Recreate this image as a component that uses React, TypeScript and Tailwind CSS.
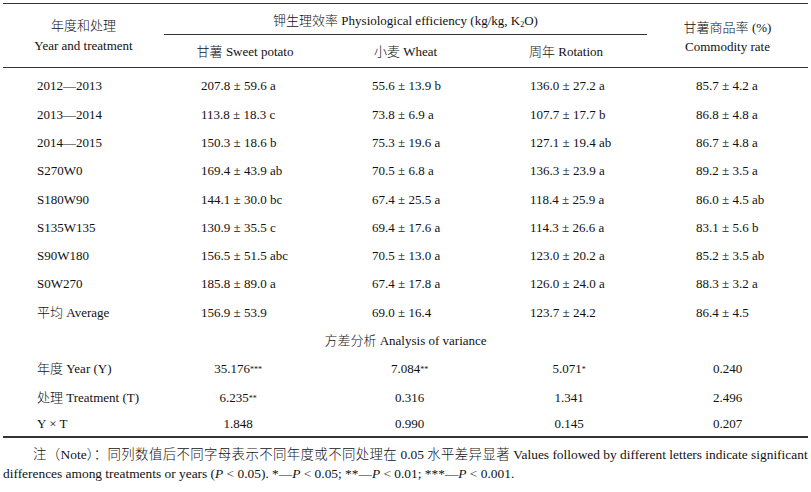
import React from "react";

const font = { fontFamily: '"Liberation Serif", "Noto Sans CJK SC", serif' };

function C({ children }: { children: React.ReactNode }) {
  return <span className="font-light">{children}</span>;
}

const rows: [React.ReactNode, string, string, string, string][] = [
  ["2012—2013", "207.8 ± 59.6 a", "55.6 ± 13.9 b", "136.0 ± 27.2 a", "85.7 ± 4.2 a"],
  ["2013—2014", "113.8 ± 18.3 c", "73.8 ± 6.9 a", "107.7 ± 17.7 b", "86.8 ± 4.8 a"],
  ["2014—2015", "150.3 ± 18.6 b", "75.3 ± 19.6 a", "127.1 ± 19.4 ab", "86.7 ± 4.8 a"],
  ["S270W0", "169.4 ± 43.9 ab", "70.5 ± 6.8 a", "136.3 ± 23.9 a", "89.2 ± 3.5 a"],
  ["S180W90", "144.1 ± 30.0 bc", "67.4 ± 25.5 a", "118.4 ± 25.9 a", "86.0 ± 4.5 ab"],
  ["S135W135", "130.9 ± 35.5 c", "69.4 ± 17.6 a", "114.3 ± 26.6 a", "83.1 ± 5.6 b"],
  ["S90W180", "156.5 ± 51.5 abc", "70.5 ± 13.0 a", "123.0 ± 20.2 a", "85.2 ± 3.5 ab"],
  ["S0W270", "185.8 ± 89.0 a", "67.4 ± 17.8 a", "126.0 ± 24.0 a", "88.3 ± 3.2 a"],
  [<><C>平均</C> Average</>, "156.9 ± 53.9", "69.0 ± 16.4", "123.7 ± 24.2", "86.4 ± 4.5"],
];

const anova: [React.ReactNode, [string, string], [string, string], [string, string], string][] = [
  [<><C>年度</C> Year (Y)</>, ["35.176", "***"], ["7.084", "**"], ["5.071", "*"], "0.240"],
  [<><C>处理</C> Treatment (T)</>, ["6.235", "**"], ["0.316", ""], ["1.341", ""], "2.496"],
  ["Y × T", ["1.848", ""], ["0.990", ""], ["0.145", ""], "0.207"],
];

const grid = "grid grid-cols-[161px_162px_159px_162px_161px]";

function Val({ v }: { v: [string, string] }) {
  return (
    <span>
      {v[0]}
      {v[1] && <sup className="text-[8px] relative top-[-1px]">{v[1]}</sup>}
    </span>
  );
}

export default function App() {
  return (
    <div className="w-[811px] h-[492px] bg-white text-[#111] text-[13px] overflow-hidden" style={font}>
      <div className="ml-[3px] w-[805px] mt-[3px] border-t border-[#333]">
        {/* header */}
        <div className={`${grid} grid-rows-[31px_32px] border-b border-[#333]`}>
          <div className="row-span-2 flex flex-col items-center justify-center leading-[20px] pt-[1px]">
            <div>
              <C>年度和处理</C>
            </div>
            <div>Year and treatment</div>
          </div>
          <div className="col-span-3 flex items-center justify-center border-b border-[#333] leading-none pt-[2px]">
            <span>
              <C>钾生理效率</C> Physiological efficiency (kg/kg, K<sub className="text-[8px]">2</sub>O)
            </span>
          </div>
          <div className="row-span-2 flex flex-col items-center justify-center leading-[19px] pt-[2px]">
            <div>
              <C>甘薯商品率</C> (%)
            </div>
            <div>Commodity rate</div>
          </div>
          <div className="flex items-center justify-center pt-[2px]">
            <span>
              <C>甘薯</C> Sweet potato
            </span>
          </div>
          <div className="flex items-center justify-center pt-[2px]">
            <span>
              <C>小麦</C> Wheat
            </span>
          </div>
          <div className="flex items-center justify-center pt-[2px]">
            <span>
              <C>周年</C> Rotation
            </span>
          </div>
        </div>
        {/* body */}
        <div className="pt-[4px] border-b-2 border-[#333]">
          {rows.map((r, i) => (
            <div key={i} className={`${grid} h-[28.3px] items-center`}>
              <div className="pl-[34px]">{r[0]}</div>
              <div className="pl-[37px]">{r[1]}</div>
              <div className="pl-[46px]">{r[2]}</div>
              <div className="pl-[45px]">{r[3]}</div>
              <div className="pl-[49px]">{r[4]}</div>
            </div>
          ))}
          <div className="h-[28.3px] flex items-center justify-center">
            <span>
              <C>方差分析</C> Analysis of variance
            </span>
          </div>
          {anova.map((r, i) => (
            <div
              key={i}
              className={`${grid} ${i === 2 ? "h-[24px]" : "h-[28.5px]"} items-center`}
            >
              <div className="pl-[34px]">{r[0]}</div>
              <div className="text-center pr-[14px]">
                <Val v={r[1]} />
              </div>
              <div className="text-center pl-[8px]">
                <Val v={r[2]} />
              </div>
              <div className="text-center pl-[6px]">
                <Val v={r[3]} />
              </div>
              <div className="text-center">{r[4]}</div>
            </div>
          ))}
        </div>
        {/* note */}
        <div className="pt-[7px] leading-[19px] text-[13.4px] whitespace-nowrap">
          <div className="pl-[30px]">
            <span className="font-light tracking-[0.4px]">注（</span>Note
            <span className="font-light tracking-[0.4px]">）：同列数值后不同字母表示不同年度或不同处理在</span> 0.05{" "}
            <span className="font-light tracking-[0.4px]">水平差异显著</span> Values followed by different letters
            indicate significant
          </div>
          <div>
            differences among treatments or years (<i>P</i> &lt; 0.05). *—<i>P</i> &lt; 0.05; **—<i>P</i> &lt; 0.01;
            ***—<i>P</i> &lt; 0.001.
          </div>
        </div>
      </div>
    </div>
  );
}
